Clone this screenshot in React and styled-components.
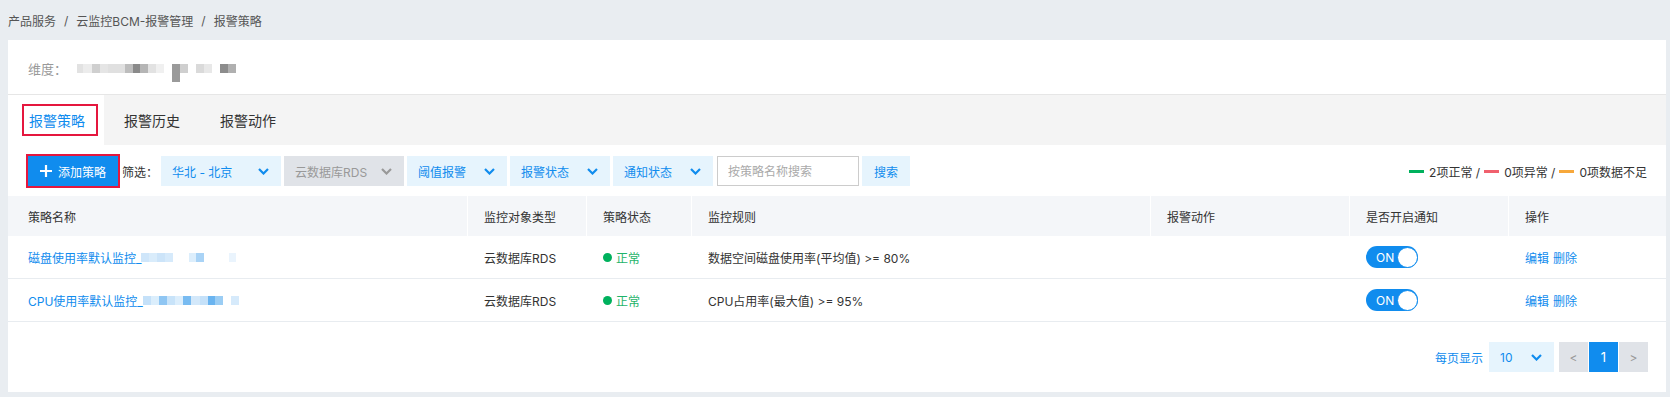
import React from 'react'
import styled, { createGlobalStyle } from 'styled-components'

const BLUE = '#108cee'
const RED = '#e5173e'

const GlobalStyle = createGlobalStyle`
  body {
    margin: 0;
    background: #e9edf1;
    font-family: Inter, "Noto Sans CJK SC", sans-serif;
    color: #333;
    font-size: 12px;
  }
`

const Page = styled.div`
  width: 1670px;
  box-sizing: border-box;
  padding: 0 4px 4px 8px;
`

const Crumbs = styled.div`
  height: 40px;
  display: flex;
  align-items: center;
  color: #555;
  font-size: 12px;
`

const Sep = styled.span`
  margin: 0 8px;
`

const Card = styled.div`
  background: #fff;
`

const DimRow = styled.div`
  height: 55px;
  box-sizing: border-box;
  border-bottom: 1px solid #e6e6e6;
  padding: 2px 0 0 20px;
  display: flex;
  align-items: center;
  font-size: 13px;
  color: #999;
`

const DimLabel = styled.span`
  margin-right: 10px;
`

const Pixels = styled.span`
  display: inline-flex;
  align-items: flex-start;
  height: 9px;
  overflow: visible;
`

const Px = styled.i`
  display: block;
  flex: none;
  width: ${p => p.$w}px;
  height: ${p => p.$h || 9}px;
  background: ${p => p.$c};
`

const TabBar = styled.div`
  height: 50px;
  background: #f4f4f4;
  display: flex;
`

const Tab = styled.div`
  width: 96px;
  display: flex;
  align-items: center;
  justify-content: ${p => (p.$active ? 'flex-start' : 'center')};
  padding-left: ${p => (p.$active ? '14px' : '0')};
  box-sizing: border-box;
  font-size: 14px;
  color: ${p => (p.$active ? BLUE : '#333')};
  background: ${p => (p.$active ? '#fff' : 'transparent')};
`

const Marked = styled.span`
  display: inline-flex;
  align-items: center;
  box-sizing: border-box;
  height: ${p => p.$h || 32}px;
  border: 2px solid ${RED};
  padding: ${p => p.$pad || '0'};
`

const Toolbar = styled.div`
  display: flex;
  align-items: center;
  padding: 9px 19px 0 18px;
  height: 34px;
`

const AddButton = styled.button`
  height: 30px;
  width: 90px;
  border: 0;
  background: ${BLUE};
  color: #fff;
  font: inherit;
  font-size: 12px;
  display: flex;
  align-items: center;
  gap: 6px;
  padding: 0 12px;
  box-sizing: border-box;
`

const FilterLabel = styled.span`
  margin: 0 3px 0 2px;
  font-size: 12px;
  color: #333;
`

const Select = styled.div`
  width: ${p => p.$w}px;
  height: 30px;
  box-sizing: border-box;
  margin-right: 3px;
  padding: 0 12px 0 11px;
  display: flex;
  align-items: center;
  justify-content: space-between;
  background: ${p => (p.$disabled ? '#e0e3e8' : '#e6f4fd')};
  color: ${p => (p.$disabled ? '#999' : BLUE)};
  font-size: 12px;
`

const SearchInput = styled.input`
  width: 142px;
  height: 30px;
  box-sizing: border-box;
  border: 1px solid #ccc;
  padding: 0 10px;
  font: inherit;
  font-size: 12px;
  margin: 0 3px 0 1px;
  outline: none;

  &::placeholder {
    color: #aaa;
  }
`

const SearchButton = styled.button`
  width: 48px;
  height: 30px;
  border: 0;
  background: #e6f4fd;
  color: ${BLUE};
  font: inherit;
  font-size: 12px;
`

const Legend = styled.div`
  margin-left: auto;
  display: flex;
  align-items: center;
  font-size: 12px;
  color: #333;
  white-space: pre;
`

const Dash = styled.i`
  display: block;
  width: 15px;
  height: 3px;
  margin: 0 5px 0 4px;
  background: ${p => p.$c};
`

const Table = styled.div`
  margin-top: 8px;
  display: grid;
  grid-template-columns: 459px 119px 105px 459px 199px 159px 1fr;
`

const Th = styled.div`
  height: 40px;
  background: #f4f6f9;
  display: flex;
  align-items: center;
  padding-left: ${p => (p.$first ? 20 : 16)}px;
  border-left: ${p => (p.$first ? '0' : '1px solid #fff')};
  color: #333;
  font-size: 12px;
`

const Td = styled.div`
  height: 43px;
  box-sizing: border-box;
  border-bottom: 1px solid #e8ecf0;
  display: flex;
  align-items: center;
  padding-left: ${p => (p.$first ? 20 : 17)}px;
  font-size: 12px;
  color: #333;
`

const Link = styled.a`
  color: ${BLUE};
  text-decoration: none;
  margin-right: ${p => p.$mr || 0}px;
`

const Dot = styled.i`
  width: 9px;
  height: 9px;
  border-radius: 50%;
  background: #00b15d;
  margin-right: 4px;
`

const StatusText = styled.span`
  color: #1fb46a;
`

const Toggle = styled.div`
  width: 52px;
  height: 22px;
  border-radius: 11px;
  background: ${BLUE};
  display: flex;
  align-items: center;
  justify-content: space-between;
  padding-left: 10px;
  box-sizing: border-box;
  color: #fff;
  font-size: 12px;
`

const Knob = styled.i`
  width: 21px;
  height: 21px;
  box-sizing: border-box;
  border-radius: 50%;
  border: 1px solid ${BLUE};
  background: #fff;
`

const Pager = styled.div`
  display: flex;
  justify-content: flex-end;
  align-items: center;
  padding: 20px 18px 20px 0;
  font-size: 12px;
`

const PerPage = styled.span`
  color: ${BLUE};
  margin-right: 6px;
`

const PageBtn = styled.div`
  width: 29px;
  height: 30px;
  margin-left: 1px;
  display: flex;
  align-items: center;
  justify-content: center;
  background: ${p => (p.$current ? BLUE : '#e0e3e8')};
  color: ${p => (p.$current ? '#fff' : '#999')};
  font-size: ${p => (p.$current ? 13 : 12)}px;
`

const Chevron = ({ color = BLUE }) => (
  <svg width="11" height="7" viewBox="0 0 11 7" fill="none">
    <path d="M1 1l4.5 4.5L10 1" stroke={color} strokeWidth="2.2" />
  </svg>
)

const Plus = () => (
  <svg width="12" height="12" viewBox="0 0 12 12">
    <path d="M6 0v12M0 6h12" stroke="#fff" strokeWidth="2.2" />
  </svg>
)

const dimCells = [
  [6, '#e2e2e2'], [9, '#ececec'], [8, '#cfcfcf'], [8, '#e5e5e5'], [17, '#e0e0e0'],
  [8, '#bdbdbd'], [7, '#8a8a8a'], [8, '#b5b5b5'], [8, '#e2e2e2'], [8, '#f0f0f0'],
  [8, 'transparent'], [8, '#9a9a9a', 18], [8, '#cfcfcf'], [8, 'transparent'],
  [8, '#dadada'], [8, '#e8e8e8'], [8, 'transparent'], [8, '#8c8c8c'], [8, '#b0b0b0']
]

const rows = [
  {
    name: '磁盘使用率默认监控_',
    rule: '数据空间磁盘使用率(平均值) >= 80%',
    cells: [
      [8, '#cfe6fa'], [8, '#d9ecfb'], [8, '#cce4f9'], [8, '#d6eafb'], [16, 'transparent'],
      [7, '#dceefc'], [8, '#a9d3f6'], [25, 'transparent'], [7, '#eaf4fd']
    ]
  },
  {
    name: 'CPU使用率默认监控_',
    rule: 'CPU占用率(最大值) >= 95%',
    cells: [
      [8, '#c5e1f9'], [8, '#dbeefc'], [8, '#8fc6f3'], [8, '#c8e3f9'], [8, '#dceefc'],
      [8, '#78bbf1'], [9, '#d3e8fa'], [8, '#c5e1f9'], [7, '#6ab4f0'], [8, '#9bcdf4'],
      [8, 'transparent'], [8, '#d6eafb']
    ]
  }
]

const headers = ['策略名称', '监控对象类型', '策略状态', '监控规则', '报警动作', '是否开启通知', '操作']

const renderPixels = cells => (
  <Pixels>
    {cells.map(([w, c, h], i) => (
      <Px key={i} $w={w} $c={c} $h={h} />
    ))}
  </Pixels>
)

export default function App() {
  return (
    <Page>
      <GlobalStyle />
      <Crumbs>
        产品服务<Sep>/</Sep>云监控BCM-报警管理<Sep>/</Sep>报警策略
      </Crumbs>
      <Card>
        <DimRow>
          <DimLabel>维度：</DimLabel>
          {renderPixels(dimCells)}
        </DimRow>
        <TabBar>
          <Tab $active>
            <Marked $pad="0 11px 0 5px">报警策略</Marked>
          </Tab>
          <Tab>报警历史</Tab>
          <Tab>报警动作</Tab>
        </TabBar>
        <Toolbar>
          <Marked $h={34}>
            <AddButton>
              <Plus />
              添加策略
            </AddButton>
          </Marked>
          <FilterLabel>筛选：</FilterLabel>
          <Select $w={120}>
            华北 - 北京
            <Chevron />
          </Select>
          <Select $w={120} $disabled>
            云数据库RDS
            <Chevron color="#999" />
          </Select>
          <Select $w={100}>
            阈值报警
            <Chevron />
          </Select>
          <Select $w={100}>
            报警状态
            <Chevron />
          </Select>
          <Select $w={100}>
            通知状态
            <Chevron />
          </Select>
          <SearchInput placeholder="按策略名称搜索" />
          <SearchButton>搜索</SearchButton>
          <Legend>
            <Dash $c="#00b15d" />2项正常 /<Dash $c="#f0606d" />0项异常 /
            <Dash $c="#f7a83b" />0项数据不足
          </Legend>
        </Toolbar>
        <Table>
          {headers.map((h, i) => (
            <Th key={h} $first={i === 0}>
              {h}
            </Th>
          ))}
          {rows.map(r => (
            <React.Fragment key={r.name}>
              <Td $first>
                <Link>{r.name}</Link>
                {renderPixels(r.cells)}
              </Td>
              <Td>云数据库RDS</Td>
              <Td>
                <Dot />
                <StatusText>正常</StatusText>
              </Td>
              <Td>{r.rule}</Td>
              <Td />
              <Td>
                <Toggle>
                  ON
                  <Knob />
                </Toggle>
              </Td>
              <Td>
                <Link $mr={4}>编辑</Link>
                <Link>删除</Link>
              </Td>
            </React.Fragment>
          ))}
        </Table>
        <Pager>
          <PerPage>每页显示</PerPage>
          <Select $w={65} style={{ marginRight: 4 }}>
            10
            <Chevron />
          </Select>
          <PageBtn>&lt;</PageBtn>
          <PageBtn $current>1</PageBtn>
          <PageBtn>&gt;</PageBtn>
        </Pager>
      </Card>
    </Page>
  )
}
